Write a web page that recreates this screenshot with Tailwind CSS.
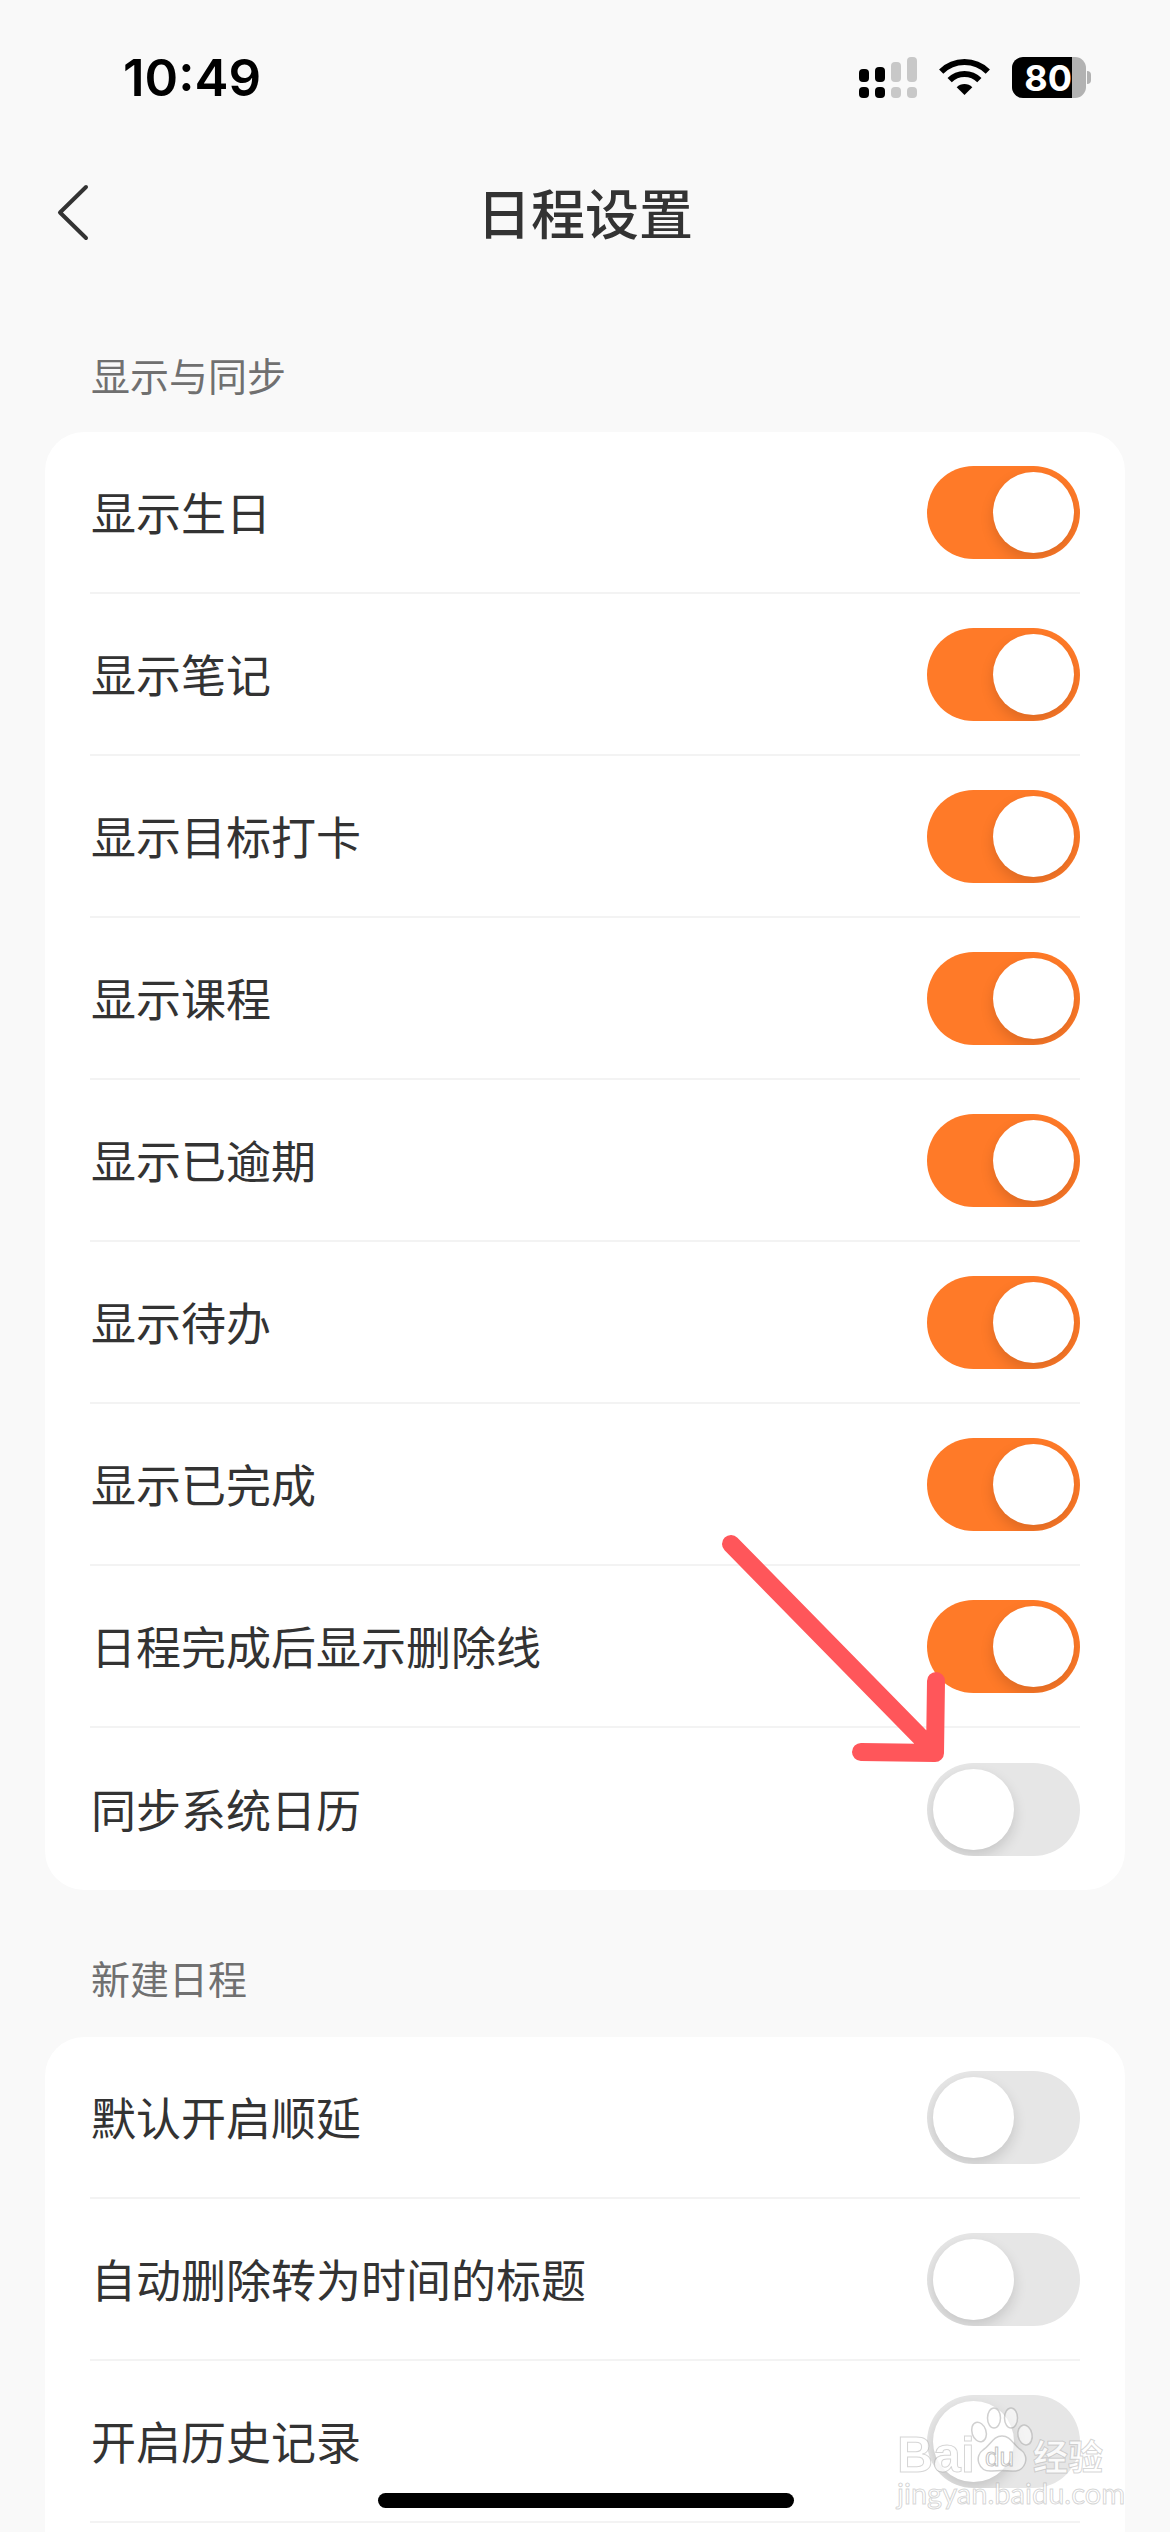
<!DOCTYPE html>
<html lang="zh-CN">
<head>
    <meta charset="UTF-8">
    <meta name="viewport" content="width=device-width, initial-scale=1.0">
    <title>日程设置</title>
    <script src="https://cdn.jsdelivr.net/npm/@tailwindcss/browser@4"></script>
</head>
<body class="relative h-[2532px] overflow-hidden bg-[#f9f9f9] font-['Noto_Sans_CJK_SC','Noto_Sans',sans-serif] text-[#333]">

    <!-- Status bar -->
    <div class="flex h-[150px] items-start justify-between pl-[123px] pr-[79px] pt-[57px]">
        <span class="font-['Inter',sans-serif] text-[51px] font-semibold leading-[42px] text-black">10:49</span>
        <div class="flex items-start gap-[22px]">
            <div class="flex h-[41px] items-end gap-[6px]">
                <div class="flex flex-col gap-[5px]"><i class="block h-[13px] w-[10px] rounded-[4px] bg-black"></i><i class="block h-[11px] w-[10px] rounded-[4px] bg-black"></i></div>
                <div class="flex flex-col gap-[5px]"><i class="block h-[15px] w-[10px] rounded-[4px] bg-black"></i><i class="block h-[11px] w-[10px] rounded-[4px] bg-black"></i></div>
                <div class="flex flex-col gap-[5px]"><i class="block h-[20px] w-[10px] rounded-[4px] bg-[#c8c8c8]"></i><i class="block h-[11px] w-[10px] rounded-[4px] bg-[#c8c8c8]"></i></div>
                <div class="flex flex-col gap-[5px]"><i class="block h-[25px] w-[10px] rounded-[4px] bg-[#c8c8c8]"></i><i class="block h-[11px] w-[10px] rounded-[4px] bg-[#c8c8c8]"></i></div>
            </div>
            <svg class="mt-[2px]" width="51" height="37" viewBox="0 0 51 37" fill="none">
                <path d="M2.2 12.7A33 33 0 0 1 48.8 12.7" stroke="#000" stroke-width="6"/>
                <path d="M10.65 21.15A21 21 0 0 1 40.35 21.15" stroke="#000" stroke-width="6"/>
                <path d="M25.5 36L17.7 28.2A11 11 0 0 1 33.3 28.2Z" fill="#000"/>
            </svg>
            <div class="flex items-center">
                <div class="flex h-[41px] w-[74px] overflow-hidden rounded-[11px] bg-[#b2b2b2]">
                    <div class="flex w-[60px] items-center justify-end bg-black font-['Inter',sans-serif] text-[36px] font-bold leading-none text-white">80</div>
                </div>
                <div class="ml-[1px] h-[13px] w-[4px] rounded-r-full bg-[#b2b2b2]"></div>
            </div>
        </div>
    </div>

    <!-- Nav bar -->
    <div class="relative flex h-[126px] items-center justify-center">
        <svg class="absolute left-[56px] top-[34px]" width="34" height="57" viewBox="0 0 34 57" fill="none">
            <path d="M30 3L4 28.5L30 54" stroke="#333" stroke-width="4" stroke-linecap="round" stroke-linejoin="round"/>
        </svg>
        <h1 class="-mt-[2px] text-[54px] font-medium leading-none">日程设置</h1>
    </div>

    <div class="mx-[45px]">
        <div class="mb-[31px] mt-[71px] flex h-[54px] items-center pl-[46px] text-[39px] text-[#707070]">显示与同步</div>
        <div id="card-display" class="overflow-hidden rounded-[39px] bg-white pl-[45px] pr-[45px]"></div>

        <div class="mb-[33px] mt-[60px] flex h-[54px] items-center pl-[46px] text-[39px] text-[#707070]">新建日程</div>
        <div id="card-new" class="h-[600px] overflow-hidden rounded-[39px] bg-white pl-[45px] pr-[45px]"></div>
    </div>

    <!-- Annotation arrow on top of the screenshot -->
    <svg class="pointer-events-none absolute left-0 top-0" width="1170" height="2532" viewBox="0 0 1170 2532" fill="none">
        <path d="M731 1544L935 1752M936 1681L935 1753L861 1752" stroke="#ff565a" stroke-width="18" stroke-linecap="round" stroke-linejoin="round"/>
    </svg>

    <!-- Baidu watermark -->
    <div class="pointer-events-none absolute left-[897px] top-[2407px] h-[100px] w-[212px] text-white/80">
        <svg class="absolute left-[68px] top-0" width="72" height="72" viewBox="0 0 72 72" fill="rgba(255,255,255,0.55)" stroke="rgba(150,150,150,0.45)" stroke-width="1.5">
            <ellipse cx="14" cy="25" rx="7" ry="10" transform="rotate(-18 14 25)"/>
            <ellipse cx="29" cy="11" rx="6.5" ry="10"/>
            <ellipse cx="46" cy="11" rx="6.5" ry="10"/>
            <ellipse cx="60" cy="28" rx="7" ry="10" transform="rotate(-12 60 28)"/>
            <path d="M37 29C28 29 26 38 18 43C9 49 13 65 27 64C32 63.5 42 63.5 47 64C61 65 65 49 56 43C48 38 46 29 37 29Z"/>
        </svg>
        <div class="absolute left-0 top-[26px] font-['Liberation_Sans',sans-serif] text-[50px] font-bold leading-[44px] [-webkit-text-stroke:1px_rgba(150,150,150,0.4)]">Bai</div>
        <div class="absolute left-[88px] top-[36px] font-['Liberation_Sans',sans-serif] text-[26px] leading-[28px] [-webkit-text-stroke:1px_rgba(130,130,130,0.5)]">du</div>
        <div class="absolute left-[136px] top-[26px] text-[35px] font-bold leading-[44px] [-webkit-text-stroke:1px_rgba(150,150,150,0.4)]">经验</div>
        <div class="absolute left-0 top-[71px] font-['Lato',sans-serif] text-[29px] leading-[30px] [-webkit-text-stroke:1px_rgba(150,150,150,0.4)]">jingyan.baidu.com</div>
    </div>

    <!-- Home indicator -->
    <div class="absolute left-[378px] top-[2493px] h-[15px] w-[416px] rounded-full bg-black"></div>

    <script>
        const displayRows = [
            ['显示生日', true],
            ['显示笔记', true],
            ['显示目标打卡', true],
            ['显示课程', true],
            ['显示已逾期', true],
            ['显示待办', true],
            ['显示已完成', true],
            ['日程完成后显示删除线', true],
            ['同步系统日历', false]
        ];
        const newRows = [
            ['默认开启顺延', false],
            ['自动删除转为时间的标题', false],
            ['开启历史记录', false]
        ];

        function rowHtml(label, on, last) {
            const track = on ? 'justify-end bg-[#ff7a28]' : 'justify-start bg-[#e6e6e6]';
            const border = last ? '' : 'border-b-2 border-[#f3f3f3]';
            return `<div class="flex h-[162px] items-center justify-between ${border}">
                <span class="-mt-[2px] pl-px text-[45px] leading-none">${label}</span>
                <div class="flex h-[93px] w-[153px] items-center overflow-hidden rounded-full px-[6px] ${track}">
                    <div class="h-[81px] w-[81px] rounded-full bg-white shadow-[0_6px_14px_rgba(0,0,0,0.14)]"></div>
                </div>
            </div>`;
        }

        document.getElementById('card-display').innerHTML =
            displayRows.map((r, i) => rowHtml(r[0], r[1], i === displayRows.length - 1)).join('');
        document.getElementById('card-new').innerHTML =
            newRows.map(r => rowHtml(r[0], r[1], false)).join('');
    </script>
</body>
</html>
